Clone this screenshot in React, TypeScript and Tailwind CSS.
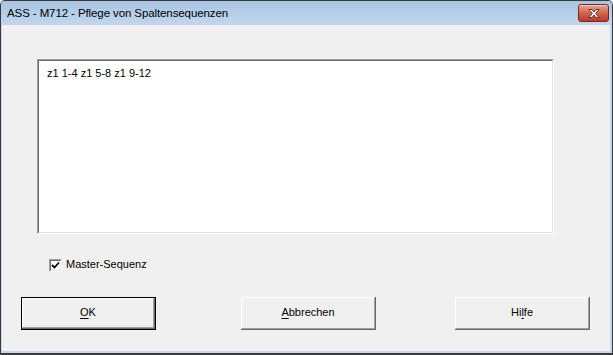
import React from "react";

const font = { fontFamily: '"Liberation Sans", Arial, sans-serif' };

const CloseButton = () => (
  <div className="w-[31px] h-[18px] rounded-[3px] border border-[#6e2a23] bg-gradient-to-b from-[#e8a493] via-[#d0634d] to-[#c03a23] flex items-center justify-center shadow-[inset_0_1px_0_rgba(255,255,255,0.5)]">
    <svg width="14" height="11" viewBox="0 0 14 11">
      <path
        d="M2 1.5 L5 1.5 L7 4 L9 1.5 L12 1.5 L8.6 5.5 L12 9.5 L9 9.5 L7 7 L5 9.5 L2 9.5 L5.4 5.5 Z"
        fill="#ffffff"
        stroke="#5a2a26"
        strokeWidth="0.9"
        strokeLinejoin="round"
      />
    </svg>
  </div>
);

const Button = ({
  label,
  mnemonic,
  isDefault,
  className,
}: {
  label: string;
  mnemonic: number;
  isDefault?: boolean;
  className?: string;
}) => (
  <div
    className={`w-[135px] h-[33px] ${isDefault ? "border border-black" : ""} ${className ?? ""}`}
  >
    <div className="w-full h-full border-r border-b border-[#696969]">
      <div className="w-full h-full border-t border-l border-white border-r border-b border-r-[#a0a0a0] border-b-[#a0a0a0] bg-[#f0f0f0] flex items-center justify-center text-[11px] text-black">
        <span>
          {label.slice(0, mnemonic)}
          <span className="underline underline-offset-2">{label[mnemonic]}</span>
          {label.slice(mnemonic + 1)}
        </span>
      </div>
    </div>
  </div>
);

export default function App() {
  return (
    <div
      className="w-[613px] h-[355px] bg-[#c3d8ef] border border-[#3a3a3a] border-b-2 rounded-t-[5px] flex flex-col overflow-hidden"
      style={font}
    >
      {/* Title bar */}
      <div className="h-[24px] shrink-0 bg-gradient-to-b from-[#a9c4e2] to-[#c2d7ee] flex items-center pl-[6px] pr-[3px]">
        <span className="text-[11.5px] tracking-[-0.1px] text-black flex-1 pt-[1px]">
          ASS - M712 - Pflege von Spaltensequenzen
        </span>
        <CloseButton />
      </div>

      {/* Client area */}
      <div className="flex-1 mx-[1px] mr-[2px] mb-[2px] bg-[#f0f0f0] flex flex-col">
        {/* Text box */}
        <div className="ml-[35px] mt-[34px] w-[517px] h-[175px] border-t border-l border-[#a0a0a0] border-r border-b border-r-white border-b-white">
          <div className="w-full h-full border-t border-l border-[#696969] border-r border-b border-r-[#e3e3e3] border-b-[#e3e3e3] bg-white pl-[8px] pt-[4px] text-[11px] text-black">
            z1 1-4 z1 5-8 z1 9-12
          </div>
        </div>

        {/* Checkbox */}
        <div className="ml-[47px] mt-[24px] flex items-center gap-[4px]">
          <div className="w-[13px] h-[13px] border-t border-l border-[#a0a0a0] border-r border-b border-r-white border-b-white">
            <div className="w-full h-full border-t border-l border-[#696969] border-r border-b border-r-[#e3e3e3] border-b-[#e3e3e3] bg-white flex items-center justify-center">
              <svg width="9" height="9" viewBox="0 0 9 9">
                <path d="M1 4 L3.5 6.5 L8 1.5" fill="none" stroke="#000" strokeWidth="1.8" />
              </svg>
            </div>
          </div>
          <span className="text-[11px] text-black -mt-[2px]">Master-Sequenz</span>
        </div>

        {/* Buttons */}
        <div className="mt-[24px] ml-[19px] flex">
          <Button label="OK" mnemonic={0} isDefault />
          <Button label="Abbrechen" mnemonic={0} className="ml-[85px]" />
          <Button label="Hilfe" mnemonic={2} className="ml-[79px]" />
        </div>
      </div>
    </div>
  );
}
